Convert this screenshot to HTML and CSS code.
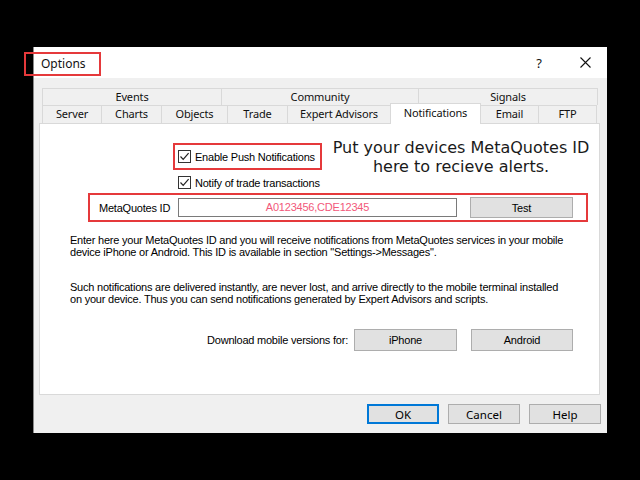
FILE: index.html
```html
<!DOCTYPE html>
<html lang="en">
<head>
  <meta charset="UTF-8">
  <title>Options</title>
  <link rel="stylesheet" href="styles.css">
</head>
<body>
  <div class="dialog">
    <!-- barra de titulo -->
    <div class="titlebar">
      <span class="title">Options</span>
      <span class="caption-btn help-btn">?</span>
      <span class="caption-btn close-btn">
        <svg width="11" height="11" viewBox="0 0 11 11"><path d="M0.5 0.5 L10.5 10.5 M10.5 0.5 L0.5 10.5" stroke="#111" stroke-width="1.1" fill="none"/></svg>
      </span>
    </div>

    <!-- abas -->
    <div class="tabs">
      <div class="tab-row">
        <div class="tab w-events">Events</div>
        <div class="tab w-community">Community</div>
        <div class="tab w-signals">Signals</div>
      </div>
      <div class="tab-row">
        <div class="tab w-server">Server</div>
        <div class="tab w-charts">Charts</div>
        <div class="tab w-objects">Objects</div>
        <div class="tab w-trade">Trade</div>
        <div class="tab w-experts">Expert Advisors</div>
        <div class="tab w-notify active">Notifications</div>
        <div class="tab w-email">Email</div>
        <div class="tab w-ftp">FTP</div>
      </div>
    </div>

    <!-- painel de notificacoes -->
    <div class="panel">
      <div class="top">
        <div class="checks">
          <div class="push-box">
            <span class="checkbox"><svg width="11" height="11" viewBox="0 0 11 11"><path d="M1.5 5.5 L4.2 8.3 L9.6 2.2" stroke="#222" stroke-width="1.2" fill="none"/></svg></span>
            <span class="check-label">Enable Push Notifications</span>
          </div>
          <div class="notify-row">
            <span class="checkbox"><svg width="11" height="11" viewBox="0 0 11 11"><path d="M1.5 5.5 L4.2 8.3 L9.6 2.2" stroke="#222" stroke-width="1.2" fill="none"/></svg></span>
            <span class="check-label">Notify of trade transactions</span>
          </div>
        </div>
        <div class="hint">Put your devices MetaQuotes ID<br>here to recieve alerts.</div>
      </div>

      <div class="id-box">
        <span class="id-label">MetaQuotes ID</span>
        <span class="id-input">A0123456,CDE12345</span>
        <button class="btn test-btn">Test</button>
      </div>

      <p class="info first">Enter here your MetaQuotes ID and you will receive notifications from MetaQuotes services in your mobile<br>device iPhone or Android. This ID is available in section "Settings-&gt;Messages".</p>
      <p class="info second">Such notifications are delivered instantly, are never lost, and arrive directly to the mobile terminal installed<br>on your device. Thus you can send notifications generated by Expert Advisors and scripts.</p>

      <div class="download">
        <span class="download-label">Download mobile versions for:</span>
        <button class="btn store-btn">iPhone</button>
        <button class="btn store-btn">Android</button>
      </div>
    </div>

    <!-- botoes do dialogo -->
    <div class="buttons">
      <button class="btn dlg-btn default">OK</button>
      <button class="btn dlg-btn">Cancel</button>
      <button class="btn dlg-btn">Help</button>
    </div>
  </div>
</body>
</html>
```

FILE: styles.css
```css
body {
  margin: 0;
  background-color: #000;
  font-family: 'Liberation Sans', Arial, sans-serif;
  color: #000;
  padding: 47px 0 0 33px;
  height: 480px;
  box-sizing: border-box;
  overflow: hidden;
}

.dialog {
  width: 574px;
  height: 386px;
  background-color: #f0f0f0;
  border-left: 1px solid #8a8a8a;
  box-sizing: border-box;
  display: flex;
  flex-direction: column;
}

/* Barra de titulo */
.titlebar {
  height: 31px;
  background-color: #fff;
  display: flex;
  align-items: center;
}

.title {
  display: inline-block;
  box-sizing: border-box;
  height: 24px;
  width: 77px;
  margin-left: -10px;
  margin-top: 2px;
  padding-left: 15px;
  border: 2px solid #e5393b;
  font-family: 'Noto Sans', sans-serif;
  font-size: 12px;
  line-height: 19px;
  color: #111;
}

.caption-btn {
  width: 46px;
  height: 31px;
  display: flex;
  align-items: center;
  justify-content: center;
}

.help-btn {
  margin-left: auto;
  font-family: 'Noto Sans', sans-serif;
  font-size: 13px;
  color: #111;
}

.close-btn {
  margin-right: -1px;
}

/* Abas */
.tabs {
  margin: 10px 0 0 8px;
  width: 556px;
}

.tab-row {
  display: flex;
  height: 18px;
}

.tab-row:first-child {
  height: 17px;
}

.tab {
  box-sizing: border-box;
  border: 1px solid #d9d9d9;
  border-bottom: none;
  margin-left: -1px;
  background-color: #f0f0f0;
  font-family: 'Noto Sans', sans-serif;
  font-size: 11px;
  letter-spacing: -0.15px;
  text-align: center;
  line-height: 16px;
  color: #111;
  white-space: nowrap;
}

.tab:first-child {
  margin-left: 0;
}

.tab.active {
  position: relative;
  z-index: 1;
  background-color: #fff;
  margin-top: -2px;
  height: 21px;
  line-height: 18px;
}

.w-events { width: 180px; }
.w-community { width: 198px; }
.w-signals { width: 180px; }
.w-server { width: 60px; }
.w-charts { width: 61px; }
.w-objects { width: 67px; }
.w-trade { width: 61px; }
.w-experts { width: 104px; }
.w-notify { width: 91px; }
.w-email { width: 59px; }
.w-ftp { width: 59px; }

/* Painel */
.panel {
  box-sizing: border-box;
  margin-left: 5px;
  width: 561px;
  height: 272px;
  background-color: #fff;
  border: 1px solid #d9d9d9;
  font-size: 11px;
  letter-spacing: -0.22px;
}

.top {
  display: flex;
  align-items: flex-start;
}

.checks {
  margin: 19px 0 0 133px;
}

.push-box {
  box-sizing: border-box;
  width: 149px;
  height: 27px;
  border: 2px solid #e5393b;
  display: flex;
  align-items: center;
  padding-left: 3px;
}

.notify-row {
  display: flex;
  align-items: center;
  margin-top: 6px;
  padding-left: 5px;
  height: 13px;
}

.checkbox {
  box-sizing: border-box;
  width: 13px;
  height: 13px;
  border: 1px solid #333;
  background-color: #fff;
  display: flex;
  align-items: center;
  justify-content: center;
}

.check-label {
  margin-left: 4px;
  white-space: nowrap;
}

.hint {
  width: 270px;
  margin: 14px 0 0 4px;
  font-family: 'DejaVu Sans', Verdana, sans-serif;
  font-size: 16px;
  letter-spacing: 0;
  line-height: 19px;
  text-align: center;
  color: #1a1a1a;
  white-space: nowrap;
}

.id-box {
  box-sizing: border-box;
  margin: 4px 0 0 48px;
  width: 500px;
  height: 29px;
  border: 2px solid #e5393b;
  display: flex;
  align-items: center;
}

.id-label {
  width: 88px;
  padding-left: 9px;
  box-sizing: border-box;
}

.id-input {
  box-sizing: border-box;
  width: 279px;
  height: 19px;
  border: 1px solid #7a7a7a;
  text-align: center;
  line-height: 17px;
  color: #f2587a;
  font-size: 11px;
}

.btn {
  box-sizing: border-box;
  font-family: 'Liberation Sans', Arial, sans-serif;
  font-size: 11px;
  letter-spacing: -0.2px;
  color: #000;
  background-color: #e1e1e1;
  border: 1px solid #adadad;
  padding: 0;
}

.test-btn {
  margin-left: 13px;
  width: 103px;
  height: 21px;
}

.info {
  margin: 12px 0 0 30px;
  line-height: 12px;
  white-space: nowrap;
}

.info.second {
  margin-top: 23px;
}

.download {
  display: flex;
  align-items: center;
  justify-content: flex-end;
  margin: 24px 26px 0 0;
}

.download-label {
  margin-right: 6px;
}

.store-btn {
  width: 103px;
  height: 22px;
}

.store-btn + .store-btn {
  margin-left: 14px;
  width: 102px;
}

/* Botoes do dialogo */
.buttons {
  display: flex;
  justify-content: flex-end;
  margin: 9px 6px 0 0;
}

.dlg-btn {
  width: 72px;
  height: 20px;
  margin-left: 9px;
  font-family: 'Noto Sans', sans-serif;
  font-size: 11.5px;
  letter-spacing: 0;
}

.dlg-btn.default {
  border: 2px solid #0078d7;
}
```
